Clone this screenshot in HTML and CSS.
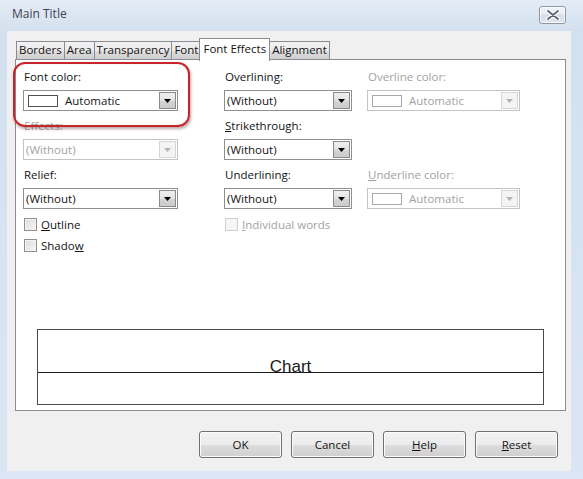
FILE: index.html
```html
<!DOCTYPE html>
<html>
<head>
<meta charset="utf-8">
<link rel="stylesheet" href="styles.css">
</head>
<body>
<div class="window">
  <div class="titlebar">
    <span class="title">Main Title</span>
    <div class="close">
      <svg width="14" height="10" viewBox="0 0 14 10"><path d="M2 1 L12 9 M12 1 L2 9" stroke="#fff" stroke-width="4" stroke-linecap="round"/><path d="M2 1 L12 9 M12 1 L2 9" stroke="#5a6472" stroke-width="1.8" stroke-linecap="round"/></svg>
    </div>
  </div>
  <div class="client">
    <div class="tabs">
      <div class="tab">Borders</div>
      <div class="tab">Area</div>
      <div class="tab">Transparency</div>
      <div class="tab">Font</div>
      <div class="tab active">Font Effects</div>
      <div class="tab">Alignment</div>
    </div>
    <div class="panel">
      <div class="cols">
        <div class="col col1">
          <div class="field">
            <div class="label">Font color:</div>
            <div class="combo">
              <div class="value"><span class="swatch"></span>Automatic</div>
              <div class="drop"><svg width="7" height="4" viewBox="0 0 7 4"><path d="M0 0h7L3.5 4z" fill="#000"/></svg></div>
            </div>
          </div>
          <div class="field disabled">
            <div class="label">Effects:</div>
            <div class="combo">
              <div class="value">(Without)</div>
              <div class="drop"><svg width="7" height="4" viewBox="0 0 7 4"><path d="M0 0h7L3.5 4z" fill="#b4b4b4"/></svg></div>
            </div>
          </div>
          <div class="field last">
            <div class="label">Relief:</div>
            <div class="combo">
              <div class="value">(Without)</div>
              <div class="drop"><svg width="7" height="4" viewBox="0 0 7 4"><path d="M0 0h7L3.5 4z" fill="#000"/></svg></div>
            </div>
          </div>
          <div class="checks">
            <label class="check"><span class="box"></span><span><u>O</u>utline</span></label>
            <label class="check"><span class="box"></span><span>Shado<u>w</u></span></label>
          </div>
        </div>
        <div class="col col2">
          <div class="field">
            <div class="label">Overlining:</div>
            <div class="combo">
              <div class="value">(Without)</div>
              <div class="drop"><svg width="7" height="4" viewBox="0 0 7 4"><path d="M0 0h7L3.5 4z" fill="#000"/></svg></div>
            </div>
          </div>
          <div class="field">
            <div class="label"><u>S</u>trikethrough:</div>
            <div class="combo">
              <div class="value">(Without)</div>
              <div class="drop"><svg width="7" height="4" viewBox="0 0 7 4"><path d="M0 0h7L3.5 4z" fill="#000"/></svg></div>
            </div>
          </div>
          <div class="field last">
            <div class="label">Underlining:</div>
            <div class="combo">
              <div class="value">(Without)</div>
              <div class="drop"><svg width="7" height="4" viewBox="0 0 7 4"><path d="M0 0h7L3.5 4z" fill="#000"/></svg></div>
            </div>
          </div>
          <div class="checks">
            <label class="check disabled"><span class="box"></span><span><u>I</u>ndividual words</span></label>
          </div>
        </div>
        <div class="col col3">
          <div class="field disabled">
            <div class="label">Overline color:</div>
            <div class="combo">
              <div class="value"><span class="swatch"></span>Automatic</div>
              <div class="drop"><svg width="7" height="4" viewBox="0 0 7 4"><path d="M0 0h7L3.5 4z" fill="#b4b4b4"/></svg></div>
            </div>
          </div>
          <div class="field spacer"></div>
          <div class="field disabled last">
            <div class="label"><u>U</u>nderline color:</div>
            <div class="combo">
              <div class="value"><span class="swatch"></span>Automatic</div>
              <div class="drop"><svg width="7" height="4" viewBox="0 0 7 4"><path d="M0 0h7L3.5 4z" fill="#b4b4b4"/></svg></div>
            </div>
          </div>
        </div>
      </div>
      <div class="preview">
        <div class="preview-top"><span class="chart">Chart</span></div>
        <div class="preview-bottom"></div>
      </div>
    </div>
    <div class="buttons">
      <div class="btn">OK</div>
      <div class="btn">Cancel</div>
      <div class="btn"><u>H</u>elp</div>
      <div class="btn"><u>R</u>eset</div>
    </div>
  </div>
  <div class="highlight"></div>
</div>
</body>
</html>
```
FILE: styles.css
```css
* { box-sizing: border-box; }
html, body { margin: 0; padding: 0; }
body {
  width: 583px;
  height: 479px;
  overflow: hidden;
  font-family: "Open Sans", "Noto Sans", sans-serif;
  font-size: 11.5px;
  color: #141414;
}
u { text-decoration: underline; text-underline-offset: 1px; }

.window {
  position: relative;
  width: 583px;
  height: 479px;
  background: linear-gradient(180deg, #e4ecf6 0px, #d3e0ef 30px, #dae6f3 100%);
  display: flex;
  flex-direction: column;
}
.titlebar {
  height: 31px;
  display: flex;
  align-items: center;
  justify-content: space-between;
  padding: 0 17px 4px 12px;
}
.title {
  font-size: 12px;
  color: #3c4350;
}
.close {
  width: 27px;
  height: 18px;
  margin-top: 3px;
  border: 1px solid #8b98aa;
  border-radius: 3px;
  background: linear-gradient(180deg, #f3f6fa 0%, #e3e9f1 50%, #d5dde8 51%, #dfe6ef 100%);
  box-shadow: inset 0 0 0 1px rgba(255,255,255,0.7);
  display: flex;
  align-items: center;
  justify-content: center;
}

.client {
  margin: 0 12px 8px 7px;
  flex: 1;
  background: #f0f0f0;
  display: flex;
  flex-direction: column;
}
.tabs {
  display: flex;
  align-items: flex-end;
  height: 21px;
  margin-top: 7px;
  padding-left: 9px;
  position: relative;
  z-index: 2;
}
.tab {
  height: 18px;
  line-height: 16px;
  padding: 0 2px;
  border: 1px solid #898c95;
  border-bottom: none;
  margin-right: -1px;
  background: linear-gradient(180deg, #f2f2f2 0%, #ebebeb 50%, #dddddd 51%, #cfcfcf 100%);
  white-space: nowrap;
}
.tab.active {
  height: 23px;
  line-height: 20px;
  margin: 0 -1px -2px -1px;
  padding: 0 3px;
  background: #fff;
  position: relative;
  z-index: 3;
}

.panel {
  margin-left: 8px;
  margin-right: 5px;
  height: 352px;
  background: #fff;
  border: 1px solid #898c95;
  padding: 9px 0 0 7px;
  display: flex;
  flex-direction: column;
  position: relative;
  z-index: 1;
}
.cols {
  display: flex;
}
.col { display: flex; flex-direction: column; }
.col1 { width: 155px; }
.col2 { width: 128px; margin-left: 46px; }
.col3 { width: 153px; margin-left: 15px; }

.field { margin-bottom: 7px; }
.field.last { margin-bottom: 0; }
.field.spacer { height: 42px; }
.label {
  height: 16px;
  line-height: 16px;
  margin-bottom: 5px;
  padding-left: 1px;
  white-space: nowrap;
}
.combo {
  height: 21px;
  border: 1px solid #8e8f8f;
  background: #fff;
  display: flex;
}
.value {
  flex: 1;
  display: flex;
  align-items: center;
  padding-left: 2px;
  white-space: nowrap;
}
.swatch {
  width: 30px;
  height: 12px;
  border: 1px solid #505050;
  margin: 0 7px 0 2px;
  background: #fff;
}
.drop {
  width: 17px;
  margin: 1px;
  border: 1px solid #8a8a8a;
  background: linear-gradient(180deg, #f0f0f0 0%, #e2e2e2 50%, #d4d4d4 51%, #cbcbcb 100%);
  display: flex;
  align-items: center;
  justify-content: center;
}
.disabled .label,
.disabled .value { color: #a2a2a2; }
.disabled .combo { border-color: #c4c4c4; }
.disabled .swatch { border-color: #a8a8a8; }
.disabled .drop {
  border-color: #d6d6d6;
  background: #f4f4f4;
}

.checks { margin-top: 5px; }
.check {
  height: 21px;
  display: flex;
  align-items: center;
  padding-left: 1px;
  white-space: nowrap;
}
.check .box {
  width: 13px;
  height: 13px;
  border: 1px solid #8f8f8f;
  background: linear-gradient(135deg, #dcdcdc 0%, #f6f6f6 100%);
  box-shadow: inset 0 0 0 1px #f4f4f4;
  margin-right: 4px;
}
.check.disabled { color: #a2a2a2; }
.check.disabled .box {
  border-color: #cfcfcf;
  background: #f6f6f6;
}

.preview {
  margin: auto 21px 5px 14px;
  height: 76px;
  border: 1px solid #4a4a4a;
  display: flex;
  flex-direction: column;
}
.preview-top {
  height: 42px;
  display: flex;
  align-items: flex-end;
  justify-content: center;
}
.chart {
  font-family: "Liberation Sans", Arial, sans-serif;
  font-size: 17px;
  line-height: 11px;
  color: #1a1a1a;
}
.preview-bottom {
  flex: 1;
  border-top: 1px solid #1a1a1a;
}

.buttons {
  display: flex;
  justify-content: flex-end;
  gap: 9px;
  padding: 20px 13px 0 0;
}
.btn {
  width: 83px;
  height: 27px;
  border: 1px solid #707070;
  border-radius: 3px;
  background: linear-gradient(180deg, #f2f2f2 0%, #ebebeb 50%, #dddddd 51%, #cfcfcf 100%);
  box-shadow: inset 0 0 0 1px #fcfcfc;
  display: flex;
  align-items: center;
  justify-content: center;
  font-size: 11.5px;
}

.highlight {
  position: absolute;
  left: 13px;
  top: 62px;
  width: 177px;
  height: 65px;
  border: 2.5px solid #c8242b;
  border-radius: 12px;
  box-shadow: 1px 2px 3px rgba(60,0,0,0.35), inset 0 0 1px rgba(120,0,0,0.3);
  z-index: 5;
  pointer-events: none;
}
```
